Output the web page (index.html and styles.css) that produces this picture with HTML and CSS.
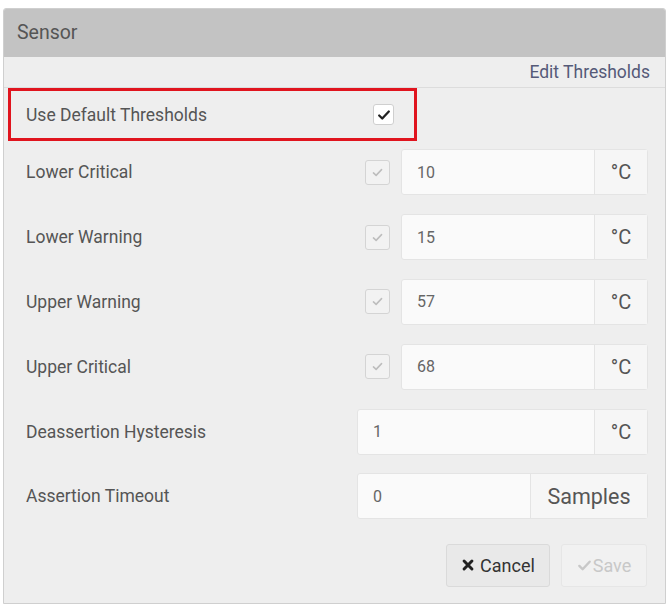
FILE: index.html
```html
<!DOCTYPE html>
<html lang="en">
<head>
    <meta charset="UTF-8" />
    <meta name="viewport" content="width=device-width, initial-scale=1.0" />
    <title>Sensor</title>
    <link rel="stylesheet" href="styles.css">
</head>
<body>
    <div class="panel">
        <div class="panel-heading">Sensor</div>

        <div class="toolbar">
            <a href="#" class="edit-link">Edit Thresholds</a>
        </div>

        <div class="default-row">
            <span class="label">Use Default Thresholds</span>
            <span class="check check-on">
                <svg viewBox="0 0 16 16" width="14" height="14"><path d="M2.5 8.5 L6 12 L13.5 4" fill="none" stroke="#222" stroke-width="2.6" stroke-linecap="round" stroke-linejoin="round"/></svg>
            </span>
        </div>

        <ul class="rows">
            <li class="row">
                <span class="label">Lower Critical</span>
                <span class="check check-off">
                    <svg viewBox="0 0 16 16" width="13" height="13"><path d="M3 8.5 L6.3 11.5 L13 4.5" fill="none" stroke="#bdbdbd" stroke-width="1.9" stroke-linecap="round" stroke-linejoin="round"/></svg>
                </span>
                <div class="input-group">
                    <input type="text" value="10" />
                    <span class="addon">°C</span>
                </div>
            </li>
            <li class="row">
                <span class="label">Lower Warning</span>
                <span class="check check-off">
                    <svg viewBox="0 0 16 16" width="13" height="13"><path d="M3 8.5 L6.3 11.5 L13 4.5" fill="none" stroke="#bdbdbd" stroke-width="1.9" stroke-linecap="round" stroke-linejoin="round"/></svg>
                </span>
                <div class="input-group">
                    <input type="text" value="15" />
                    <span class="addon">°C</span>
                </div>
            </li>
            <li class="row">
                <span class="label">Upper Warning</span>
                <span class="check check-off">
                    <svg viewBox="0 0 16 16" width="13" height="13"><path d="M3 8.5 L6.3 11.5 L13 4.5" fill="none" stroke="#bdbdbd" stroke-width="1.9" stroke-linecap="round" stroke-linejoin="round"/></svg>
                </span>
                <div class="input-group">
                    <input type="text" value="57" />
                    <span class="addon">°C</span>
                </div>
            </li>
            <li class="row">
                <span class="label">Upper Critical</span>
                <span class="check check-off">
                    <svg viewBox="0 0 16 16" width="13" height="13"><path d="M3 8.5 L6.3 11.5 L13 4.5" fill="none" stroke="#bdbdbd" stroke-width="1.9" stroke-linecap="round" stroke-linejoin="round"/></svg>
                </span>
                <div class="input-group">
                    <input type="text" value="68" />
                    <span class="addon">°C</span>
                </div>
            </li>
            <li class="row">
                <span class="label">Deassertion Hysteresis</span>
                <div class="input-group wide">
                    <input type="text" value="1" />
                    <span class="addon">°C</span>
                </div>
            </li>
            <li class="row">
                <span class="label">Assertion Timeout</span>
                <div class="input-group wide">
                    <input type="text" value="0" />
                    <span class="addon addon-samples">Samples</span>
                </div>
            </li>
        </ul>

        <div class="footer">
            <button class="btn btn-cancel">
                <svg viewBox="0 0 16 16" width="14" height="14"><path d="M3.5 3.5 L12.5 12.5 M12.5 3.5 L3.5 12.5" stroke="#222" stroke-width="3.4" stroke-linecap="round"/></svg>
                Cancel
            </button>
            <button class="btn btn-save" disabled>
                <svg viewBox="0 0 16 16" width="15" height="15"><path d="M2.5 8.5 L6 12 L13.5 4" fill="none" stroke="#c8c8c8" stroke-width="2.6" stroke-linecap="round" stroke-linejoin="round"/></svg>Save
            </button>
        </div>
    </div>
</body>
</html>
```

FILE: styles.css
```css
* {
    margin: 0;
    padding: 0;
    box-sizing: border-box;
}

body {
    font-family: Roboto, "Liberation Sans", sans-serif;
    background-color: #fff;
    color: #555;
}

.panel {
    margin: 8px 4px 0 3px;
    width: 663px;
    height: 596px;
    background-color: #eeeeee;
    border: 1px solid #cfcfcf;
    border-radius: 3px 3px 0 0;
    overflow: hidden;
}

.panel-heading {
    height: 48px;
    background-color: #c3c3c3;
    padding-left: 13px;
    font-size: 19.5px;
    line-height: 48px;
    color: #555;
}

.toolbar {
    height: 31px;
    display: flex;
    align-items: center;
    justify-content: flex-end;
    padding-right: 15px;
    border-bottom: 1px solid #dcdcdc;
}

.edit-link {
    font-size: 17.5px;
    color: #555a78;
    text-decoration: none;
}

.default-row {
    margin-left: 4px;
    margin-bottom: -1px;
    width: 409px;
    height: 53px;
    border: 3px solid #e0141e;
    display: flex;
    align-items: center;
    padding-left: 15px;
}

.default-row .label {
    width: 347px;
}

.label {
    font-size: 17.5px;
    color: #555;
}

.check {
    display: flex;
    align-items: center;
    justify-content: center;
    border-radius: 3px;
}

.check-on {
    width: 21px;
    height: 21px;
    background-color: #fff;
    border: 1px solid #cfcfcf;
}

.check-off {
    width: 25px;
    height: 25px;
    background-color: #f2f2f2;
    border: 1px solid #d4d4d4;
    margin-right: 11px;
}

.rows {
    list-style: none;
}

.row {
    height: 64.8px;
    display: flex;
    align-items: center;
    padding: 0 17px 0 22px;
}

.row .label {
    flex: 1;
}

.input-group {
    display: flex;
    width: 247px;
    height: 46px;
    border: 1px solid #e4e4e4;
    border-radius: 3px;
    background-color: #fafafa;
}

.input-group.wide {
    width: 291px;
}

.input-group input {
    flex: 1;
    min-width: 0;
    border: none;
    background: transparent;
    padding-left: 15px;
    font-family: inherit;
    font-size: 16px;
    color: #666;
    outline: none;
}

.addon {
    width: 53px;
    display: flex;
    align-items: center;
    justify-content: center;
    border-left: 1px solid #e4e4e4;
    background-color: #f6f6f6;
    font-size: 20px;
    color: #555;
}

.addon-samples {
    width: 117px;
    font-size: 21.5px;
}

.footer {
    display: flex;
    justify-content: flex-end;
    gap: 11px;
    padding: 15px 18px 0 0;
}

.btn {
    height: 43px;
    display: flex;
    align-items: center;
    gap: 5px;
    border-radius: 3px;
    font-family: inherit;
    font-size: 18px;
}

.btn-cancel {
    width: 104px;
    justify-content: center;
    background-color: #e9e9e9;
    border: 1px solid #dadada;
    color: #333;
}

.btn-save {
    width: 86px;
    justify-content: center;
    gap: 1px;
    background-color: #f1f1f1;
    border: 1px solid #e6e6e6;
    color: #c8c8c8;
}
```
